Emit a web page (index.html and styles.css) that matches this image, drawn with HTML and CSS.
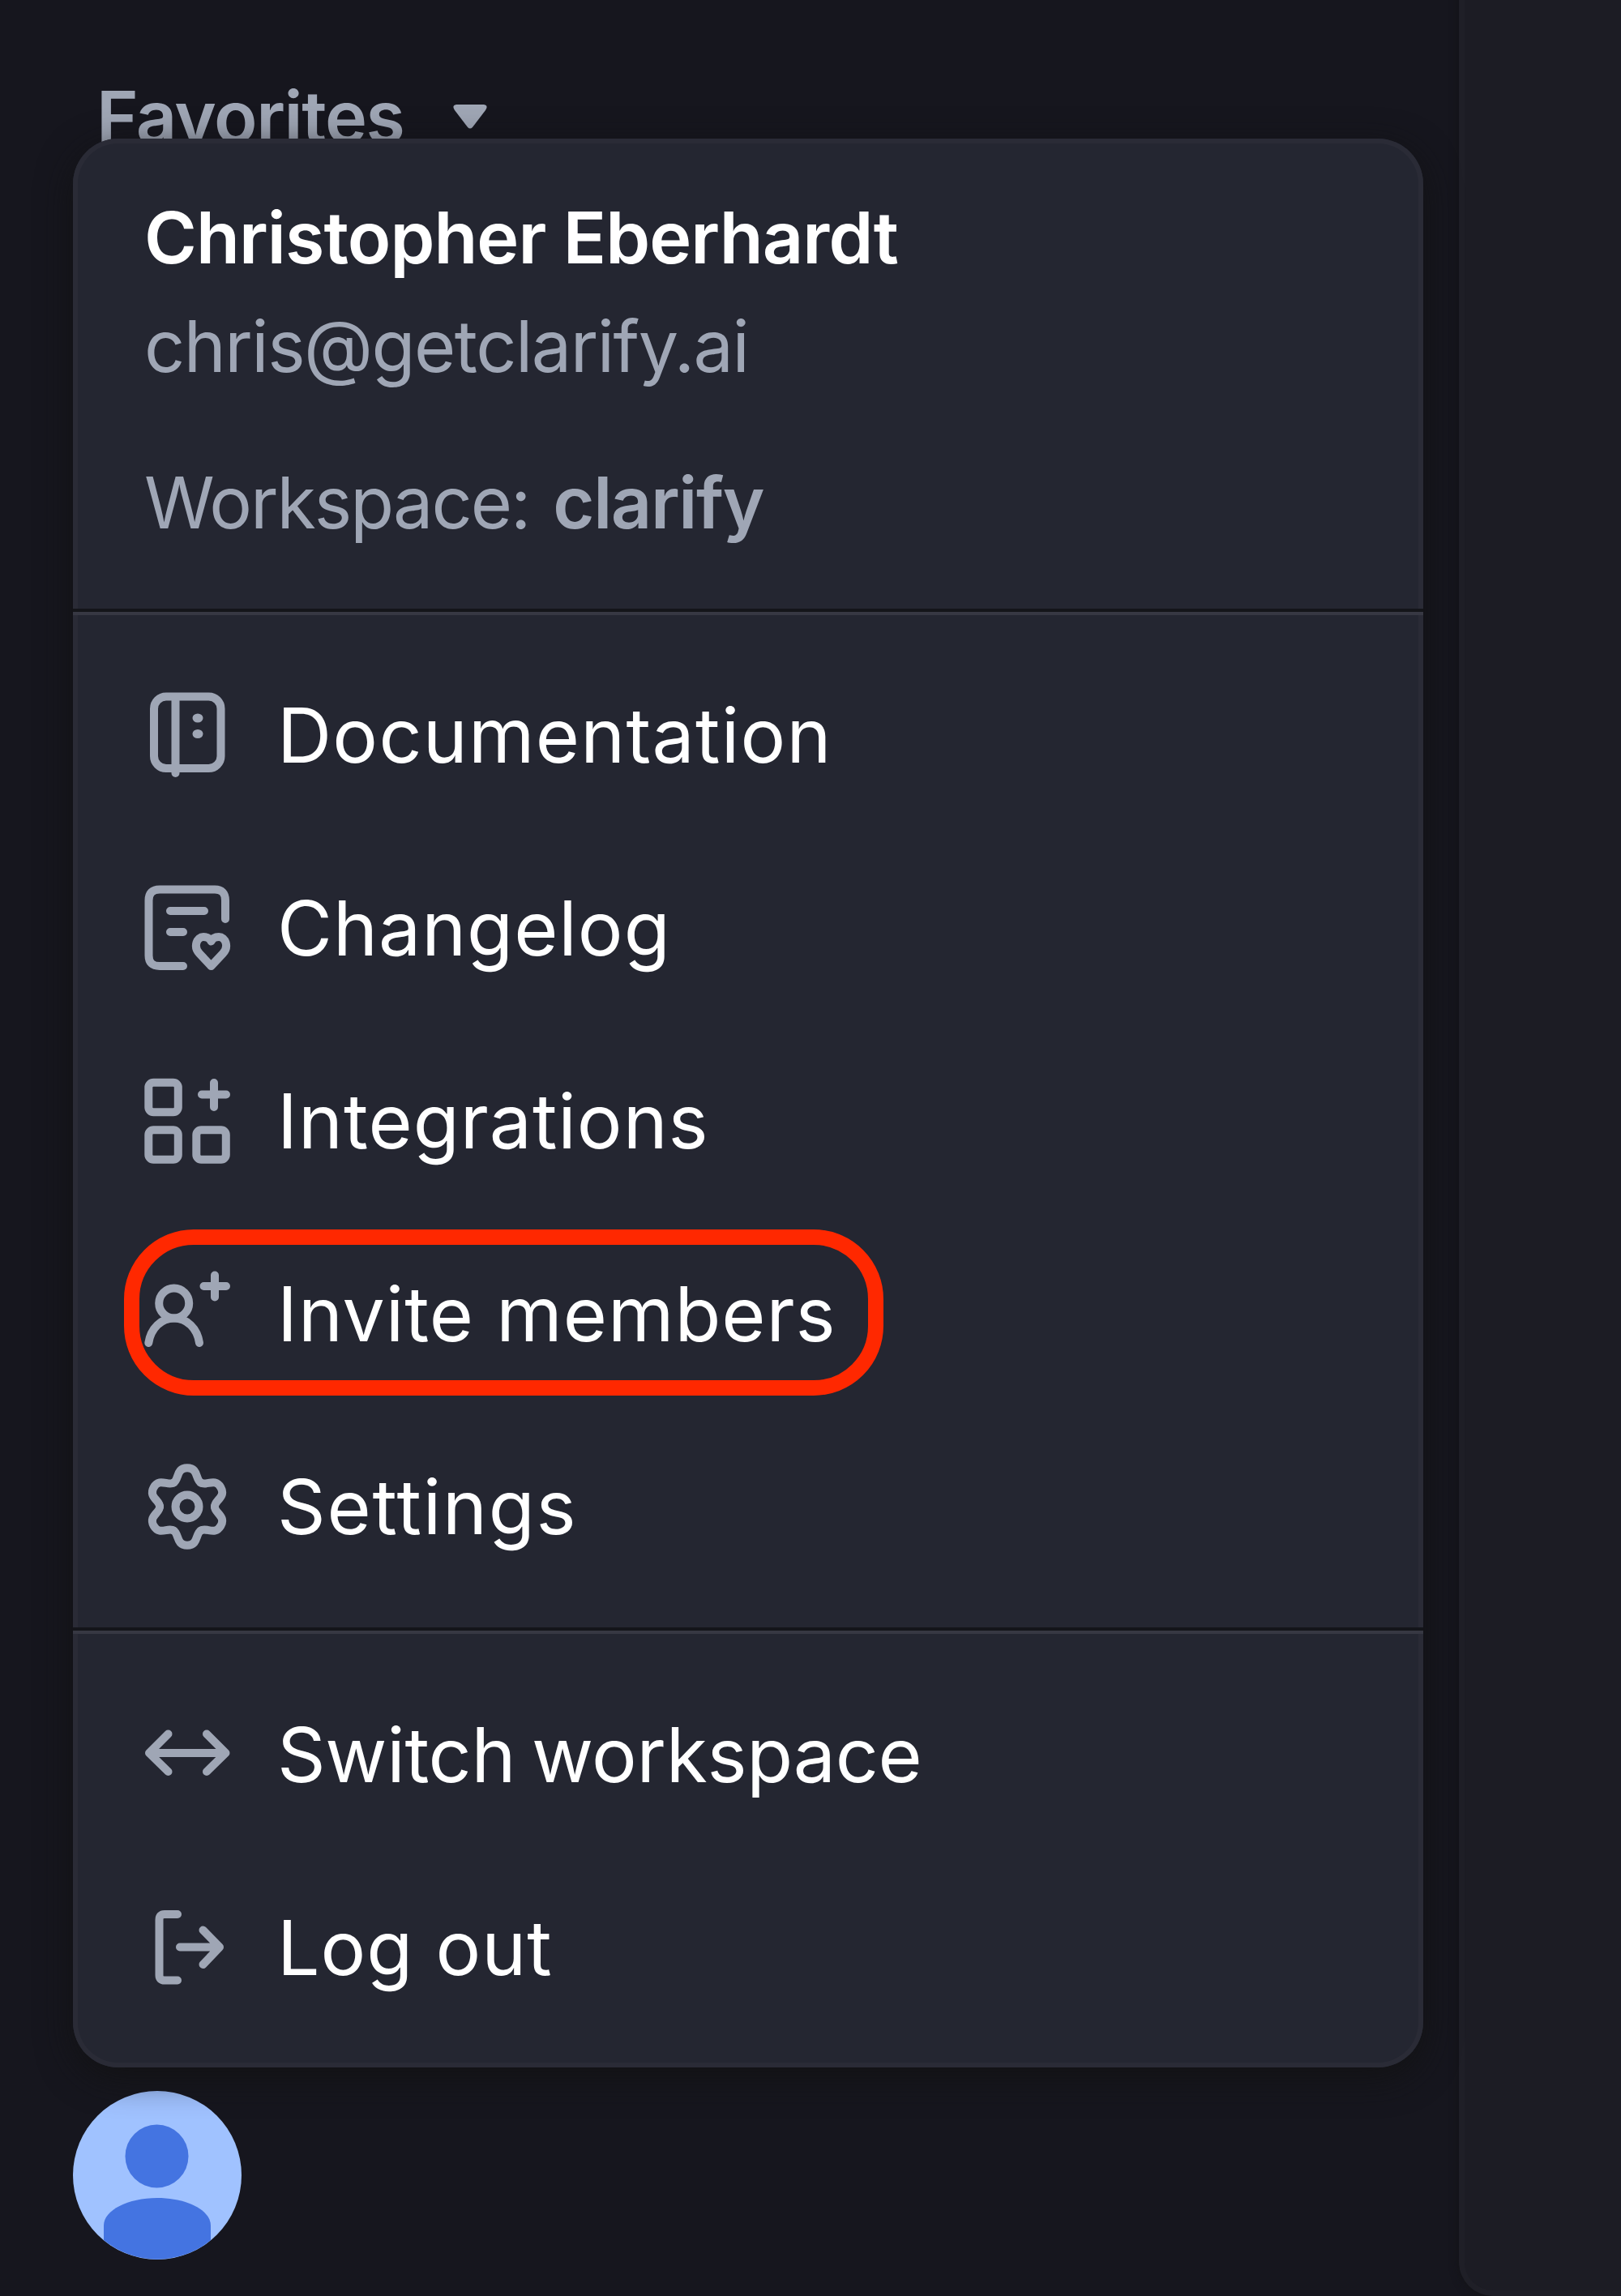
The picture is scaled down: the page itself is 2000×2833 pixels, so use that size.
FILE: index.html
```html
<!DOCTYPE html>
<html lang="en">
<head>
  <meta charset="UTF-8">
  <meta name="viewport" content="width=device-width, initial-scale=1.0">
  <title>Account menu</title>
  <link rel="stylesheet" href="styles.css">
</head>
<body>
  <aside class="sidebar">
    <div class="section-title">
      <span class="favorites">Favorites</span>
      <svg class="caret" viewBox="0 0 42 30"><path d="M4 0H38Q44 1 40 7L24 28Q21 31 18 28L2 7Q-2 1 4 0Z"/></svg>
    </div>

    <svg class="avatar" viewBox="0 0 208 208">
      <circle class="avatar-bg" cx="104" cy="104" r="104"/>
      <circle cx="103.5" cy="80.5" r="39"/>
      <path d="M38 184V166C38 147 68 132 104 132S170 147 170 166V184A104 104 0 0 1 38 184Z"/>
    </svg>

    <div class="menu">
      <div class="account">
        <div class="name">Christopher Eberhardt</div>
        <div class="email">chris@getclarify.ai</div>
        <div class="workspace"><span>Workspace:</span><strong>clarify</strong></div>
      </div>

      <ul class="menu-group">
        <li>
          <svg class="icon" viewBox="0 0 120 120">
            <rect x="19" y="12.5" width="82.5" height="88.5" rx="15"/>
            <path d="M45.5 13V107"/>
            <ellipse class="dot" cx="73" cy="39" rx="6.5" ry="5.5"/>
            <ellipse class="dot" cx="73" cy="58.5" rx="6.5" ry="5.5"/>
          </svg>
          <span class="documentation">Documentation</span>
        </li>
        <li>
          <svg class="icon" viewBox="0 0 120 120">
            <path d="M107 49V26Q107 12.5 94 12.5H26Q12.5 12.5 12.5 26V94Q12.5 107 26 107H55"/>
            <path d="M39 39H81M39 65H55"/>
            <path d="M89.5 107L75 91.5C67 83 72 71 80 71C85 71 88 73 89.5 76.5C91 73 94 71 99 71C107 71 112 83 104 91.5Z"/>
          </svg>
          <span class="changelog">Changelog</span>
        </li>
        <li>
          <svg class="icon" viewBox="0 0 120 120">
            <rect x="12.3" y="12.8" width="36.5" height="36.5" rx="6"/>
            <rect x="12.3" y="71.3" width="36.5" height="36.5" rx="6"/>
            <rect x="71.3" y="71.3" width="36.5" height="36.5" rx="6"/>
            <path d="M93 13V43M78 27.5H108"/>
          </svg>
          <span class="integrations">Integrations</span>
        </li>
        <li class="highlighted">
          <svg class="icon" viewBox="0 0 120 120">
            <circle cx="43.7" cy="47" r="18.5"/>
            <path d="M12.3 96C15 78 28 65.5 43.7 65.5S72.5 78 75 96"/>
            <path d="M94 12.5V39.5M80.5 26H108"/>
          </svg>
          <span class="invite">Invite members</span>
        </li>
        <li>
          <svg class="icon" viewBox="0 0 120 120">
            <circle cx="60" cy="60" r="14.5"/>
            <path d="M43 30.6C50 27 46 12.3 60 12.3S70 27 77 30.6"/>
            <path d="M43 30.6C50 27 46 12.3 60 12.3S70 27 77 30.6" transform="rotate(60 60 60)"/>
            <path d="M43 30.6C50 27 46 12.3 60 12.3S70 27 77 30.6" transform="rotate(120 60 60)"/>
            <path d="M43 30.6C50 27 46 12.3 60 12.3S70 27 77 30.6" transform="rotate(180 60 60)"/>
            <path d="M43 30.6C50 27 46 12.3 60 12.3S70 27 77 30.6" transform="rotate(240 60 60)"/>
            <path d="M43 30.6C50 27 46 12.3 60 12.3S70 27 77 30.6" transform="rotate(300 60 60)"/>
          </svg>
          <span class="settings">Settings</span>
        </li>
      </ul>

      <ul class="menu-group">
        <li>
          <svg class="icon" viewBox="0 0 120 120">
            <path d="M13 58H107M36.5 34.5L13 58L36.5 81M84 34.5L107.5 58L84 81"/>
          </svg>
          <span class="switch">Switch workspace</span>
        </li>
        <li>
          <svg class="icon" viewBox="0 0 120 120">
            <path d="M48 19H32Q25.5 19 25.5 26V94Q25.5 100.5 32 100.5H48"/>
            <path d="M51 59.5H100M79.5 38.5L100 59.5L79.5 81"/>
          </svg>
          <span class="logout">Log out</span>
        </li>
      </ul>
    </div>
  </aside>
  <main class="content"></main>
</body>
</html>
```

FILE: styles.css
```css
/* styles.css */
*,
*::after {
  box-sizing: border-box;
}

body {
  margin: 0;
  height: 2833px;
  display: flex;
  overflow: hidden;
  background: #16161e;
  color: #9fa6b5;
  font-family: Inter, "Liberation Sans", sans-serif;
  font-size: 88px;
}

.sidebar {
  position: relative;
  width: 1800px;
  padding: 78px 90px 45px;
  display: flex;
  flex-direction: column;
  justify-content: space-between;
}

.section-title {
  display: flex;
  align-items: center;
  padding-left: 29px;
  line-height: 132px;
  font-weight: 600;
}

.favorites {
  width: 440px;
  letter-spacing: -1.4px;
}

.caret {
  width: 42px;
  height: 30px;
  fill: #9fa6b5;
}

.avatar {
  display: block;
  width: 208px;
  height: 208px;
  fill: #4474e1;
}

.avatar-bg {
  fill: #a0c2ff;
}

/* account popover, sits over the sidebar */
.menu {
  position: absolute;
  top: 171px;
  left: 90px;
  width: 1666px;
  height: 2380px;
  background: #242631;
  border-radius: 56px;
  box-shadow: inset 0 0 0 6px #2a2b36, 0 12px 44px rgba(18, 18, 18, 0.8);
}

.account {
  height: 580px;
  padding: 56px 88px 0;
  line-height: 133px;
}

.name {
  color: #fff;
  font-weight: 600;
  letter-spacing: -0.9px;
}

.email {
  margin-top: 1px;
  letter-spacing: -1.5px;
}

.workspace {
  display: flex;
  gap: 29px;
  margin-top: 60px;
  letter-spacing: -2px;
}

.workspace strong {
  font-weight: 600;
  letter-spacing: -1.4px;
}

.menu-group {
  margin: 0;
  padding: 30px 81px;
  list-style: none;
  border-top: 4px solid #14151a;
  box-shadow: inset 0 4px #373843;
}

.menu-group li {
  position: relative;
  display: flex;
  align-items: center;
  gap: 51px;
  height: 238px;
  color: #fff;
  font-size: 93px;
  letter-spacing: 1px;
}

.menu-group:nth-child(2) {
  padding-top: 33px;
}

.menu-group:nth-child(3) {
  padding-top: 34px;
}

.menu-group .documentation {
  letter-spacing: 1.25px;
}

.menu-group .settings {
  letter-spacing: 1.8px;
}

.menu-group .switch {
  letter-spacing: -0.3px;
  word-spacing: -6px;
}

.icon {
  width: 120px;
  height: 120px;
  fill: none;
  stroke: #9fa6b5;
  stroke-width: 10;
  stroke-linecap: round;
  stroke-linejoin: round;
}

.icon .dot {
  fill: #9fa6b5;
  stroke: none;
}

.highlighted::after {
  content: "";
  position: absolute;
  top: 15px;
  left: -18px;
  width: 937px;
  height: 205px;
  border: 19px solid #ff2800;
  border-radius: 86px;
}

.content {
  flex: 1;
  margin-top: -60px;
  background: #1c1c24;
  border: 7px solid #1f1f27;
  border-right: none;
  border-radius: 0 0 0 42px;
  box-shadow: 0 0 12px #131316;
}
```
